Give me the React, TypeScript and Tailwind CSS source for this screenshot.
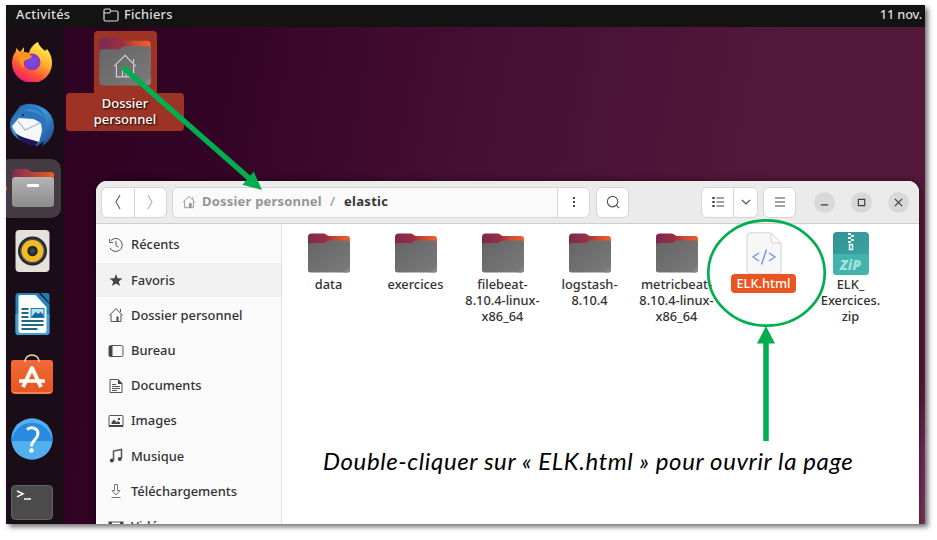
import React from "react";

type IconProps = { className?: string };

function Folder({ id, className, children }: { id: string; className?: string; children?: React.ReactNode }) {
  return (
    <svg viewBox="0 0 44 40" className={className}>
      <defs>
        <linearGradient id={`${id}b`} x1="0" x2="1">
          <stop offset="0" stopColor="#7a2952" />
          <stop offset="0.45" stopColor="#9c2f40" />
          <stop offset="0.7" stopColor="#d04d33" />
          <stop offset="1" stopColor="#ee5f2a" />
        </linearGradient>
        <linearGradient id={`${id}f`} x1="0" y1="0" x2="1" y2="1">
          <stop offset="0" stopColor="#646464" />
          <stop offset="1" stopColor="#7b7b7b" />
        </linearGradient>
      </defs>
      <path d="M1 4a3.500 3.500 0 0 1 3.500-3.500H17c2 0 3 2.500 5 2.500h18a3 3 0 0 1 3 3v20H1z" fill={`url(#${id}b)`} />
      <path d="M1 12.500a2.500 2.500 0 0 1 2.500-2.500h13c3 0 3-2.500 6-2.500H40.500a2.500 2.500 0 0 1 2.500 2.500V37a2.500 2.500 0 0 1-2.500 2.500h-37A2.500 2.500 0 0 1 1 37z" fill={`url(#${id}f)`} />
      <path d="M43 33v4a2.500 2.500 0 0 1-2.500 2.500H36z" fill="#868686" />
      {children}
    </svg>
  );
}

function Home({ className }: IconProps) {
  return (
    <svg viewBox="0 0 16 16" className={className} fill="none" stroke="currentColor" strokeWidth="1.1">
      <path d="M1 8.500 8 1.500l7 7M3 7v7.500h10V7M12.500 2.500v3" />
      <path d="M8.500 14V9.500h2V14z" fill="currentColor" />
    </svg>
  );
}

function Firefox() {
  return (
    <svg viewBox="0 0 40 40" className="size-10">
      <defs>
        <linearGradient id="fx" x1="0.8" y1="0.1" x2="0.3" y2="1">
          <stop offset="0" stopColor="#fff04a" />
          <stop offset="0.4" stopColor="#ffa82c" />
          <stop offset="0.7" stopColor="#ff5436" />
          <stop offset="1" stopColor="#f0157a" />
        </linearGradient>
        <radialGradient id="fxp">
          <stop offset="0" stopColor="#6d50e8" />
          <stop offset="1" stopColor="#8f35c2" />
        </radialGradient>
      </defs>
      <path d="M26 0c1 4 4 6 7 9l2-2c3 4 5 8 5 13a20 20 0 0 1-40 2C0 15 2 12 4 9V6l4 4 4-5v5l5 1c1-5 5-9 9-11z" fill="url(#fx)" />
      <circle cx="20" cy="20" r="8.500" fill="url(#fxp)" />
      <path d="M8 10c6-1 8 2 12 4-1 3-4 3-6 4-3 1-3 5-2 8-5-3-6-9-4-16z" fill="#ff931e" />
      <path d="M17 11c6-1 11 3 12 9 1-5-1-9-4-12z" fill="#ffc93c" />
    </svg>
  );
}

function Thunderbird() {
  return (
    <svg viewBox="0 0 44 44" className="size-11">
      <defs>
        <linearGradient id="tb" x1="0" y1="0" x2="1" y2="1">
          <stop offset="0" stopColor="#1f5d9e" />
          <stop offset="0.5" stopColor="#3b98dd" />
          <stop offset="1" stopColor="#1c3e86" />
        </linearGradient>
      </defs>
      <path d="M10 3c5-1 7-3 11-2 13 1 23 10 23 22 0 9-5 16-12 20l2-5-7 5-13-4C5 35 0 29 0 22c0-4 1-6 3-9z" fill="url(#tb)" />
      <path d="M2 23 9 15l15 1 7 4 1 8-3 11-14-4C8 33 4 29 2 23z" fill="#f5f7fa" />
      <path d="m8 18 7 9 15-7" fill="none" stroke="#b0b4bc" strokeWidth="1.200" />
      <path d="M9 15C11 5 20 2 27 5c10 5 11 15 6 25 1-7-2-11-7-13-4-2-10-2-17-2z" fill="#2c73bd" />
      <path d="M14 8C21 3 31 7 35 16c-6-6-13-8-21-8z" fill="#3a8bd6" />
      <path d="M6 31c7 4 14 5 22 8l-3 4C15 42 9 38 6 31z" fill="#21145c" />
      <circle cx="13" cy="12" r="1.200" fill="#12305c" />
    </svg>
  );
}

function DockFiles() {
  return (
    <div className="relative -ml-px flex h-[59px] w-[56px] items-center justify-center rounded-r-[10px] rounded-l-[4px] bg-[#433b41]">
      <span className="absolute top-[27px] -left-[3px] size-[5px] rounded-full bg-[#e95420]" />
      <svg viewBox="0 0 42 38" className="mr-px h-[38px] w-[42px]">
        <defs>
          <linearGradient id="dfb"><stop offset="0" stopColor="#7e2b52" /><stop offset="1" stopColor="#ee5a24" /></linearGradient>
          <linearGradient id="dff" x1="0" y1="0" x2="0" y2="1"><stop offset="0" stopColor="#b5b5b5" /><stop offset="1" stopColor="#8b8b8b" /></linearGradient>
        </defs>
        <path d="M0 4a4 4 0 0 1 4-4h10c3 0 4 3 6 3h19a3 3 0 0 1 3 3v12H0z" fill="url(#dfb)" />
        <rect y="8" width="42" height="30" rx="3.500" fill="url(#dff)" />
        <rect x="15" y="15" width="12" height="3" rx="1" fill="#fff" />
      </svg>
    </div>
  );
}

function Rhythmbox() {
  return (
    <svg viewBox="0 0 34 42" className="h-[42px] w-[35px]">
      <rect width="34" height="42" rx="4" fill="#e5e0d9" />
      <circle cx="17" cy="21" r="14.500" fill="#23262c" />
      <circle cx="17" cy="21" r="12.500" fill="#464a50" />
      <circle cx="17" cy="21" r="11" fill="#f0bb25" />
      <circle cx="17" cy="21" r="5.200" fill="#24272b" />
      <circle cx="17" cy="21" r="2.500" fill="#3d4650" />
    </svg>
  );
}

function Writer() {
  return (
    <svg viewBox="0 0 34 42" className="h-[42px] w-[35px]">
      <path d="M3 0h20l11 11v28a3 3 0 0 1-3 3H3a3 3 0 0 1-3-3V3a3 3 0 0 1 3-3z" fill="#2482bd" />
      <path d="M0 21h34v18a3 3 0 0 1-3 3H3a3 3 0 0 1-3-3z" fill="#469fd0" />
      <path d="M4 2h16l11 12v24a2 2 0 0 1-2 2H5a2 2 0 0 1-2-2V4a2 2 0 0 1 1-2z" fill="#fafcfd" />
      <path d="M25 0h7a2 2 0 0 1 2 2v8z" fill="#257bad" />
      <path d="M6 16h7M6 20h7M6 24h7M6 28h22M6 32h22M6 36h16" stroke="#22697f" strokeWidth="1.800" />
      <rect x="15.500" y="15.500" width="13" height="9" fill="#b8e0f5" stroke="#1d7eb8" />
      <path d="m16 24 4-5 3 2 2-2 3 3v2z" fill="#176797" />
    </svg>
  );
}

function Store() {
  return (
    <svg viewBox="0 0 42 40" className="mb-[5px] h-10 w-[42px]">
      <defs>
        <linearGradient id="st" x1="0" y1="0" x2="0" y2="1"><stop offset="0" stopColor="#f46a36" /><stop offset="1" stopColor="#e45420" /></linearGradient>
      </defs>
      <path d="M0 9a3 3 0 0 1 3-3h36a3 3 0 0 1 3 3v27a4 4 0 0 1-4 4H4a4 4 0 0 1-4-4z" fill="url(#st)" />
      <path d="M1 37q1 2 4 2h32q3 0 4-2" fill="none" stroke="#ffad80" />
      <path d="M14 8V7a7 6 0 0 1 14 0v1" fill="none" stroke="#f6d8ad" strokeWidth="1.600" />
      <path d="m12 33 9-19 9 19" fill="none" stroke="#fff" strokeWidth="4" strokeLinejoin="round" />
      <path d="M8 27h26" stroke="#fff" strokeWidth="3.500" />
    </svg>
  );
}

function Help() {
  return (
    <svg viewBox="0 0 42 42" className="size-[42px]">
      <circle cx="21" cy="21" r="20.700" fill="#52b0ef" />
      <path d="M.8 23a20.300 20.300 0 0 1 40.400 0z" fill="#268be1" />
      <path d="M16 11.500c5-3.500 11-1 11 4 0 6-6.500 6.500-6.500 13" fill="none" stroke="#fff" strokeWidth="3" />
      <circle cx="20.500" cy="32.500" r="2.300" fill="#fff" />
    </svg>
  );
}

function Terminal() {
  return (
    <svg viewBox="0 0 42 35" className="h-[35px] w-[42px]">
      <rect x=".5" y=".5" width="41" height="34" rx="4" fill="#4b4b4b" stroke="#656565" />
      <path d="m6 6 6 2.800-6 3M13 14h7" fill="none" stroke="#fff" strokeWidth="1.500" />
    </svg>
  );
}

const dockItems = [Firefox, Thunderbird, DockFiles, Rhythmbox, Writer, Store, Help, Terminal];

const line = { fill: "none", stroke: "#555", strokeWidth: 1 };
const places: { label: string; icon: React.ReactNode }[] = [
  { label: "Récents", icon: <><path d="M3 3.500A6.500 6.500 0 1 1 2 11" {...line} /><path d="M8 4v4.500l2.500 1.500" {...line} /><path d="M1.500 2v3.500H5" {...line} /></> },
  { label: "Favoris", icon: <path d="m8 2 1.600 4.200 4.900.2-3.800 3 1.300 4.600-4-2.600L4 14l1.300-4.600-3.800-3 4.900-.2z" fill="#444" /> },
  { label: "Dossier personnel", icon: <><path d="m1.500 8.500 6.500-7 6.500 7M3 7.500v7h10v-7M12.500 2v3" {...line} /><path d="M8.500 14V9.500h2V14z" fill="#444" /></> },
  { label: "Bureau", icon: <><rect x="1" y="2.500" width="14" height="11" rx="1.500" {...line} /><path d="M1 3h3.500v10.500H1z" fill="#444" /></> },
  { label: "Documents", icon: <><path d="M2 1.500h8l4 4v9H2z" {...line} /><path d="M10 1v5h4.500z" fill="#444" /><path d="M4 6.500h4M4 8.500h8M4 10.500h8M4 12.500h5" {...line} /></> },
  { label: "Images", icon: <><rect x="1" y="2.500" width="14" height="11" rx="1" {...line} /><path d="M1 12h14v2H1zM3.500 11V9.500L6 6.500l2.500 3L10 8l2 1.500V11zM10 5h2v2h-2z" fill="#444" /></> },
  { label: "Musique", icon: <><path d="M5.500 12.500V3l8-1.500v9" {...line} strokeWidth={1.5} /><circle cx="3.800" cy="12.500" r="2" fill="#444" /><circle cx="11.800" cy="11" r="2" fill="#444" /></> },
  { label: "Téléchargements", icon: <path d="M6.500 1.500h3v6H12l-4 4.500-4-4.500h2.500zM3.500 14.500h9" {...line} stroke="#777" /> },
  { label: "Vidéos", icon: <><rect x="1" y="3" width="14" height="11" {...line} /><path d="M3.500 3v11M12.500 3v11" {...line} /><path d="M1 3h2v2H1zM13 3h2v2h-2z" fill="#444" /></> },
];

const folders = [
  ["data"],
  ["exercices"],
  ["filebeat-", "8.10.4-linux-", "x86_64"],
  ["logstash-", "8.10.4"],
  ["metricbeat-", "8.10.4-linux-", "x86_64"],
];

function HtmlFile() {
  return (
    <svg viewBox="0 0 36 43" className="h-[43px] w-9">
      <path d="M4 .8h20L35 12v26.500a3.500 3.500 0 0 1-3.500 3.500h-27A3.500 3.500 0 0 1 1 38.500V4A3.200 3.200 0 0 1 4 .8z" fill="#f7f7f7" stroke="#d2d2d2" />
      <path d="M25 1v7a3 3 0 0 0 3 3h6.500z" fill="#fff" stroke="#cfcfcf" />
      <path d="m13 21-6 4 6 4M23 21l6 4-6 4M20.500 17.500l-5 15" fill="none" stroke="#6f98e8" strokeWidth="1.400" />
    </svg>
  );
}

function ZipFile() {
  return (
    <div className="relative flex h-[43px] w-9 flex-col justify-end overflow-hidden rounded-[4px] bg-gradient-to-br from-[#2f9294] to-[#43a6a5]">
      <svg viewBox="0 0 6 20" className="absolute top-0 left-[15px] h-5 w-[6px]">
        <path d="M0 1h3v2H0zM3 3h3v2H3zM0 5h3v2H0zM3 7h3v2H3zM0 9h3v2H0z" fill="#e5f4f3" />
        <path d="M1.500 12.500h3v5h-3z" fill="none" stroke="#f1fafa" strokeWidth="1.500" />
      </svg>
      <div className="flex h-[21px] items-center justify-center bg-[#43b3ab] font-['Open_Sans',sans-serif] text-[14px] font-extrabold text-[#a2e2dc] italic">ZiP</div>
    </div>
  );
}

function TopBar() {
  return (
    <div className="flex h-[22px] shrink-0 items-center bg-[#141313] px-[10px] pb-[3px] text-[12.8px] font-medium text-[#dfdfdf]">
      <span className="w-[87px] tracking-[0.3px]">Activités</span>
      <svg viewBox="0 0 16 14" className="mr-[5px] h-[14px] w-4" fill="none" stroke="#ddd" strokeWidth="1.200">
        <path d="M1 2.500A1.500 1.500 0 0 1 2.500 1h4L8 3h5.500A1.500 1.500 0 0 1 15 4.500v7a1.500 1.500 0 0 1-1.500 1.500h-11A1.500 1.500 0 0 1 1 11.500zM1 5h5.500L8 3" />
      </svg>
      <span className="tracking-[0.2px]">Fichiers</span>
      <span className="ml-auto -mr-[7px] tracking-[-0.15px]">11 nov.</span>
    </div>
  );
}

function HeaderBar() {
  const box = "flex h-[31px] shrink-0 items-center justify-center rounded-[6px] border border-[#d5d5d5] bg-white";
  return (
    <div className="flex h-[43px] shrink-0 items-center border-b border-[#cfcfcf] bg-[#ebebeb] pl-[5px]">
      <div className={`${box} w-[66px]`}>
        <div className="flex flex-1 justify-center"><svg viewBox="0 0 8 16" className="h-4 w-2" fill="none" stroke="#666" strokeWidth="1.200"><path d="M6 1 2 8l4 7" /></svg></div>
        <div className="h-full w-px bg-[#d5d5d5]" />
        <div className="flex flex-1 justify-center"><svg viewBox="0 0 8 16" className="h-4 w-2" fill="none" stroke="#b5b5b5" strokeWidth="1.200"><path d="m2 1 4 7-4 7" /></svg></div>
      </div>
      <div className={`${box} ml-[5px] w-[418px] overflow-hidden`}>
        <div className="flex h-full flex-1 items-center bg-[#fafafa] pl-[9px] text-[13px] font-bold text-[#959595]">
          <Home className="mr-[6px] size-[14px]" />
          <span className="w-[119px] whitespace-nowrap tracking-[0.2px]">Dossier personnel</span>
          <span className="mx-2 w-[7px] text-center font-medium">/</span>
          <span className="tracking-[0.3px] text-[#363636]">elastic</span>
        </div>
        <div className="flex h-full w-8 items-center justify-center border-l border-[#d5d5d5]">
          <svg viewBox="0 0 4 12" className="h-3 w-1" fill="#444"><path d="M1 1h2v2H1zM1 5h2v2H1zM1 9h2v2H1z" /></svg>
        </div>
      </div>
      <div className={`${box} ml-[6px] w-[33px]`}>
        <svg viewBox="0 0 16 16" className="size-[14px]" fill="none" stroke="#555" strokeWidth="1.300"><circle cx="7.500" cy="7.500" r="6" /><path d="m11.500 11.500 3.500 3.500" /></svg>
      </div>
      <div className={`${box} ml-[72px] w-[57px]`}>
        <div className="flex h-full w-8 items-center justify-center border-r border-[#d5d5d5]">
          <svg viewBox="0 0 12 12" className="size-3" fill="none" stroke="#444"><path d="M4.500 2H12M4.500 6H12M4.500 10H12" strokeWidth="1.100" /><path d="M1.500 1v2M1.500 5v2M1.500 9v2" strokeWidth="2.500" /></svg>
        </div>
        <div className="flex flex-1 justify-center"><svg viewBox="0 0 10 6" className="h-[6px] w-[10px]" fill="none" stroke="#555" strokeWidth="1.200"><path d="m1 1 4 4 4-4" /></svg></div>
      </div>
      <div className={`${box} ml-[5px] w-[33px]`}>
        <svg viewBox="0 0 10 10" className="size-[10px]" stroke="#444" strokeWidth="1.100"><path d="M0 1h10M0 5h10M0 9h10" /></svg>
      </div>
      <div className="ml-[18px] flex gap-4">
        {["M2 8.500h8", "M2.500 2.500h7v7h-7z", "m2 2 8 8M10 2l-8 8"].map((d) => (
          <div key={d} className="flex size-[21px] items-center justify-center rounded-full bg-[#d9d9d9]">
            <svg viewBox="0 0 12 12" className="size-[11px]" fill="none" stroke="#3f3f3f" strokeWidth="1.300"><path d={d} /></svg>
          </div>
        ))}
      </div>
    </div>
  );
}

function Sidebar() {
  return (
    <div className="flex w-[186px] shrink-0 flex-col border-r border-[#e2e2e2] bg-[#fafafa] pt-[3px]">
      {places.map((p, i) => (
        <div key={p.label} className="flex h-[35.200px] shrink-0 items-center">
          <div className={`flex h-[34px] w-full items-center pt-px pl-3 ${i === 1 ? "bg-[#f2f2f2]" : ""}`}>
            <svg viewBox="0 0 16 16" className="mr-[7px] size-4">{p.icon}</svg>
            <span className="text-[12.900px] font-medium text-[#323232]">{p.label}</span>
          </div>
        </div>
      ))}
    </div>
  );
}

function FileLabel({ lines }: { lines: string[] }) {
  return (
    <div className="mt-[2px] flex flex-col items-center text-[12.800px] leading-[16px] font-medium text-[#323232]">
      {lines.map((l) => <span key={l} className="whitespace-nowrap">{l}</span>)}
    </div>
  );
}

export default function App() {
  return (
    <div className="h-[540px] w-[937px] overflow-hidden bg-white pt-[5px] pl-[6px] font-['Noto_Sans','DejaVu_Sans',sans-serif]">
      <div className="relative h-[519px] w-[919px] shadow-[3px_3px_5px_rgba(0,0,0,0.55)]">
        <div className="relative flex h-full w-full flex-col overflow-hidden bg-[linear-gradient(100deg,#2c0120_0%,#330425_22%,#470f35_50%,#54183b_80%,#54183b_100%)]">
          <TopBar />
          <div className="flex w-[58px] flex-col bg-[#1a0d18] pt-[4px]">
            {dockItems.map((Item, i) => (
              <div key={i} className={`flex h-[62.850px] shrink-0 items-center ${i === 2 ? "justify-start" : "justify-center pr-[6px]"}`}><Item /></div>
            ))}
          </div>
          <div className="absolute top-[26px] left-[60px] flex w-[118px] flex-col items-center">
            <div className="flex h-[62px] w-[63px] items-start justify-center rounded-t-[4px] bg-[#9c3324] pt-[6px]">
              <Folder id="home" className="h-[49px] w-[54px]">
                <path d="m13 24 9-9 9 9M15 23v9.500h14V23M29 18v3M20 32v-6h3v6" fill="none" stroke="#cecece" />
              </Folder>
            </div>
            <div className="flex h-[38px] w-full flex-col items-center justify-center rounded-[4px] bg-[#9c3324] pb-[2px] text-[13px] leading-[16px] font-medium text-white [text-shadow:1px_1px_2px_#000]">
              <span>Dossier</span>
              <span>personnel</span>
            </div>
          </div>
          <div className="absolute top-[375px] right-0 h-[144px] w-[6px] bg-gradient-to-b from-[#54183b] via-[#742851] to-[#793259]" />
          <div className="absolute top-[176px] left-[90px] flex h-[380px] w-[823px] flex-col overflow-hidden rounded-t-[11px] bg-white shadow-[0_0_6px_rgba(0,0,0,0.6)]">
            <HeaderBar />
            <div className="flex min-h-0 flex-1">
              <Sidebar />
              <div className="flex items-start pt-2 pl-[3px]">
                {folders.map((f, i) => (
                  <div key={f[0]} className="flex w-[87px] flex-col items-center">
                    <div className="flex h-[42px] items-start pt-px"><Folder id={`dir${i}`} className="h-10 w-11" /></div>
                    <FileLabel lines={f} />
                  </div>
                ))}
                <div className="flex w-[87px] flex-col items-center">
                  <div className="h-[42px]"><HtmlFile /></div>
                  <span className="rounded-[4px] bg-[#e95420] px-[5px] text-[12.800px] leading-[19px] font-medium text-white">ELK.html</span>
                </div>
                <div className="flex w-[87px] flex-col items-center">
                  <div className="h-[42px]"><ZipFile /></div>
                  <FileLabel lines={["ELK_", "Exercices.", "zip"]} />
                </div>
              </div>
            </div>
          </div>
        </div>
        <svg className="absolute -top-[5px] -left-[6px] h-[540px] w-[937px]" viewBox="0 0 937 540">
          <path d="M122.500 67 250 179" stroke="#00ae50" strokeWidth="5.500" />
          <path d="m262 190-19.500-5.200 11.200-13.200z" fill="#00ae50" />
          <ellipse cx="766.500" cy="273" rx="58.200" ry="52.700" fill="none" stroke="#00ae50" strokeWidth="2.700" />
          <path d="M766 441V340" stroke="#00ae50" strokeWidth="5.500" />
          <path d="m766 326 9 17.500h-18z" fill="#00ae50" />
        </svg>
        <div className="absolute top-[440px] left-[317px] font-['Lato',sans-serif] text-[24px] leading-[32px] tracking-[0.610px] whitespace-nowrap text-black italic">
          Double-cliquer sur « ELK.html » pour ouvrir la page
        </div>
      </div>
    </div>
  );
}
